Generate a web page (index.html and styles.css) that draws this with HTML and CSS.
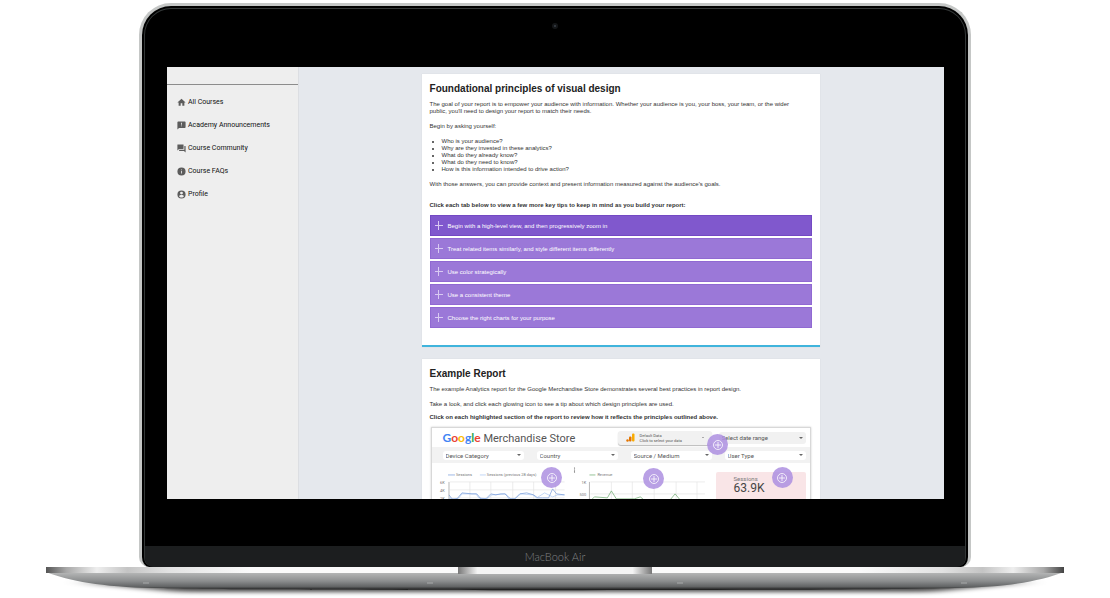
FILE: index.html
```html
<!DOCTYPE html>
<html lang="en">
<head>
  <meta charset="UTF-8">
  <meta name="viewport" content="width=device-width, initial-scale=1.0">
  <title>Foundational principles of visual design</title>
  <link rel="stylesheet" href="styles.css">
</head>
<body>
  <div class="laptop">
    <div class="lid">
      <div class="bezel-top"><span class="camera"></span></div>

      <div class="screen">
        <aside class="sidebar">
          <div class="sidebar-head"></div>
          <nav class="nav">
            <a href="#">
              <svg viewBox="1 1 22 22"><path d="M10 20v-6h4v6h5v-8h3L12 3 2 12h3v8z"/></svg>
              All Courses
            </a>
            <a href="#">
              <svg viewBox="1 1 22 22"><path d="M20 2H4c-1.100 0-2 .9-2 2v18l4-4h14c1.100 0 2-.9 2-2V4c0-1.100-.9-2-2-2zm-7 12h-2v-2h2zm0-4h-2V5h2z"/></svg>
              Academy Announcements
            </a>
            <a href="#">
              <svg viewBox="1 1 22 22"><path d="M21 6h-2v9H6v2c0 .55.45 1 1 1h11l4 4V7c0-.55-.45-1-1-1zm-4 6V3c0-.55-.45-1-1-1H3c-.55 0-1 .45-1 1v14l4-4h10c.55 0 1-.45 1-1z"/></svg>
              Course Community
            </a>
            <a href="#">
              <svg viewBox="1 1 22 22"><path d="M12 2a10 10 0 1 0 0 20 10 10 0 0 0 0-20zm1 15h-2v-6h2zm0-8h-2V7h2z"/></svg>
              Course FAQs
            </a>
            <a href="#">
              <svg viewBox="1 1 22 22"><path fill-rule="evenodd" d="M12 2a10 10 0 1 0 0 20 10 10 0 0 0 0-20zm0 3a3.500 3.500 0 1 1 0 7 3.500 3.500 0 0 1 0-7zM12 19.500c-2.500 0-4.700-1.300-6-3.200 0-2 4-3.100 6-3.100s6 1.100 6 3.100c-1.300 1.900-3.500 3.200-6 3.200z"/></svg>
              Profile
            </a>
          </nav>
        </aside>

        <main class="main">
          <section class="card card-principles">
            <h1>Foundational principles of visual design</h1>
            <p>The goal of your report is to empower your audience with information. Whether your audience is you, your boss, your team, or the wider public, you'll need to design your report to match their needs.</p>
            <p>Begin by asking yourself:</p>
            <ul>
              <li>Who is your audience?</li>
              <li>Why are they invested in these analytics?</li>
              <li>What do they already know?</li>
              <li>What do they need to know?</li>
              <li>How is this information intended to drive action?</li>
            </ul>
            <p>With those answers, you can provide context and present information measured against the audience's goals.</p>
            <p class="hint">Click each tab below to view a few more key tips to keep in mind as you build your report:</p>
            <div class="tabs">
              <button class="tab active" type="button">Begin with a high-level view, and then progressively zoom in</button>
              <button class="tab" type="button">Treat related items similarly, and style different items differently</button>
              <button class="tab" type="button">Use color strategically</button>
              <button class="tab" type="button">Use a consistent theme</button>
              <button class="tab" type="button">Choose the right charts for your purpose</button>
            </div>
          </section>

          <section class="card">
            <h1>Example Report</h1>
            <p>The example Analytics report for the Google Merchandise Store demonstrates several best practices in report design.</p>
            <p class="tight">Take a look, and click each glowing icon to see a tip about which design principles are used.</p>
            <p class="tight strong">Click on each highlighted section of the report to review how it reflects the principles outlined above.</p>

            <div class="report">
              <div class="report-row report-head">
                <h2 class="brand"><span class="google"><span class="blue">G</span><span class="red">o</span><span class="yellow">o</span><span class="blue">g</span><span class="green">l</span><span class="red">e</span></span> Merchandise Store</h2>
                <button class="data-source" type="button">
                  <svg viewBox="0 0 18 18"><rect x="12" y="1" width="5" height="16" rx="2" fill="#f9ab00"/><rect x="6" y="7" width="5" height="10" rx="2" fill="#e37400"/><circle cx="3" cy="15" r="2.500" fill="#e37400"/></svg>
                  <span>Default Data<br>Click to select your data</span>
                </button>
                <div class="select gray"><select aria-label="Date range"><option>Select date range</option></select></div>
              </div>
              <div class="report-row report-filters">
                <div class="select"><select aria-label="Device Category"><option>Device Category</option></select></div>
                <div class="select"><select aria-label="Country"><option>Country</option></select></div>
                <div class="select"><select aria-label="Source / Medium"><option>Source / Medium</option></select></div>
                <div class="select"><select aria-label="User Type"><option>User Type</option></select></div>
              </div>
              <div class="report-body">
                <svg class="charts" viewBox="0 0 274 60">
                  <!-- sessions -->
                  <path class="grid-line" d="M11 27H126M11 35H126M31 19V60M52 19V60M74 19V60M95 19V60M117 19V60M11 19H126"/>
                  <path class="axis" d="M10 19V60"/>
                  <path class="line-sky" d="M41 12H47"/>
                  <path class="line-sky" d="M10 35L14 37L20 35L23 31L37 31L40 35L48 36L53 32L67 31L70 36L76 36L82 31L94 32L98 35L106 30L114 34L119 32L126 32"/>
                  <path class="line-blue" d="M9 12H16M10 32L13 36L18 36L23 30L33 31L38 31L42 36L47 36L52 31L57 32L62 31L66 31L72 36L76 36L81 31L88 30L95 32L99 35L104 35L110 35L114 26L118 31L126 32"/>
                  <text x="17" y="13">Sessions</text>
                  <text x="48" y="13">Sessions (previous 28 days)</text>
                  <text x="1" y="21">6K</text><text x="1" y="29">4K</text><text x="1" y="37">2K</text>
                  <g class="dots"><circle cx="136" cy="5" r=".6"/><circle cx="136" cy="7" r=".6"/><circle cx="136" cy="9" r=".6"/></g>
                  <!-- revenue -->
                  <path class="grid-line" d="M152 19H267M152 31H267M173 19V60M194 19V60M216 19V60M238 19V60M259 19V60"/>
                  <path class="axis" d="M151 19V60"/>
                  <path class="line-green" d="M151 12H157M153 37L156 34L169 35L173 28L178 36L196 36L202 34L207 38L232 37L237 31L242 37L255 37"/>
                  <text x="159" y="13">Revenue</text>
                  <text x="143" y="21">1K</text><text x="141" y="33">500</text>
                </svg>
                <div class="score">
                  <span class="score-label">Sessions</span>
                  <span class="score-value">63.9K</span>
                  <span class="score-label">Product Detail Views</span>
                </div>
              </div>

              <button class="hotspot spot-date" type="button" aria-label="Date range tip"><svg viewBox="0 0 10 10"><circle cx="5" cy="5" r="4.500"/><path d="M5 2V8M2 5H8"/></svg></button>
              <button class="hotspot spot-sessions" type="button" aria-label="Sessions tip"><svg viewBox="0 0 10 10"><circle cx="5" cy="5" r="4.500"/><path d="M5 2V8M2 5H8"/></svg></button>
              <button class="hotspot spot-revenue" type="button" aria-label="Revenue tip"><svg viewBox="0 0 10 10"><circle cx="5" cy="5" r="4.500"/><path d="M5 2V8M2 5H8"/></svg></button>
              <button class="hotspot spot-score" type="button" aria-label="Scorecard tip"><svg viewBox="0 0 10 10"><circle cx="5" cy="5" r="4.500"/><path d="M5 2V8M2 5H8"/></svg></button>
            </div>
          </section>
        </main>
      </div>

      <div class="chin">MacBook Air</div>
    </div>

    <svg class="base" viewBox="0 0 1110 31">
      <defs>
        <linearGradient id="edge">
          <stop offset="0" stop-color="#555"/><stop offset=".02" stop-color="#a8a8a8"/><stop offset=".05" stop-color="#eee"/>
          <stop offset=".08" stop-color="#c4c4c4"/><stop offset=".12" stop-color="#e2e2e2"/><stop offset=".2" stop-color="#fafafa"/>
          <stop offset=".8" stop-color="#fafafa"/><stop offset=".88" stop-color="#e2e2e2"/><stop offset=".92" stop-color="#c4c4c4"/>
          <stop offset=".95" stop-color="#eee"/><stop offset=".98" stop-color="#a8a8a8"/><stop offset="1" stop-color="#444"/>
        </linearGradient>
        <linearGradient id="notch">
          <stop offset="0" stop-color="#777"/><stop offset=".1" stop-color="#f4f4f4"/>
          <stop offset=".9" stop-color="#f4f4f4"/><stop offset="1" stop-color="#777"/>
        </linearGradient>
        <linearGradient id="body" x2="0" y2="1">
          <stop offset="0" stop-color="#b8b9b9"/><stop offset=".5" stop-color="#8b8d8e"/>
          <stop offset=".8" stop-color="#626465"/><stop offset="1" stop-color="#111"/>
        </linearGradient>
        <filter id="blur" x="-10%" y="-100%" width="120%" height="300%"><feGaussianBlur stdDeviation="12 2"/></filter>
      </defs>
      <path d="M80 15H1030L930 25H180Z" fill="#000" opacity=".7" filter="url(#blur)"/>
      <path d="M46 5C70 14 100 20 155 21C260 24 850 24 955 21C1010 20 1040 14 1064 5Z" fill="url(#body)"/>
      <rect x="46" width="1018" height="6" fill="url(#edge)"/>
      <rect x="458" width="194" height="7" fill="url(#notch)"/>
      <path d="M143 16H149M427 16H433M677 16H683M961 16H967" stroke="#a8aaaa"/>
    </svg>
  </div>
</body>
</html>
```
FILE: styles.css
```css
* {
  box-sizing: border-box;
}

body {
  margin: 0;
  background: #fff;
  color: #333;
  font-family: "Liberation Sans", Arial, sans-serif;
  font-size: 6px;
  overflow: hidden;
}

h1, h2, p, ul {
  margin: 0;
}

button, select {
  border: none;
  font-family: inherit;
  cursor: pointer;
}

/* laptop frame */
.laptop {
  padding-top: 3px;
}

.lid {
  width: 75%;
  max-width: 832px;
  margin: 0 auto;
  border: 3px solid #c5c7c6;
  border-bottom: none;
  border-radius: 32px 32px 10px 10px;
  background: #000;
  box-shadow: inset 0 0 0 2px #000, inset 0 0 0 3px #343838;
}

.bezel-top {
  height: 61px;
  padding-top: 17px;
}

.camera {
  display: block;
  width: 6px;
  height: 6px;
  margin: 0 auto;
  border: 2px solid #141618;
  border-radius: 50%;
  background: #3a4048;
}

.chin {
  height: 21px;
  margin: 47px 3px 0;
  border-radius: 0 0 8px 8px;
  background: #1c1e1f;
  color: #808283;
  font-family: Lato, sans-serif;
  font-size: 11px;
  font-weight: 300;
  line-height: 21px;
  text-align: center;
}

.base {
  display: block;
  width: 100%;
}

/* screen */
.screen {
  display: flex;
  aspect-ratio: 9 / 5;
  margin: 0 24px 0 25px;
  overflow: hidden;
  background: #e5e8ed;
}

.sidebar {
  flex: 0 0 17%;
  border-right: 1px solid #dcdee2;
  background: #eee;
}

.sidebar-head {
  height: 18px;
  border-bottom: 1px solid #8c8c8c;
}

.nav {
  display: flex;
  flex-direction: column;
  gap: 13px;
  padding: 12px 10px;
}

.nav a {
  display: flex;
  align-items: center;
  gap: 2px;
  height: 10px;
  color: #111;
  font-family: Roboto, sans-serif;
  font-size: 7px;
  font-weight: 400;
  text-decoration: none;
  white-space: nowrap;
}

.nav svg {
  width: 9px;
  height: 9px;
  fill: #5c5c5c;
}

.main {
  flex: 1;
  display: flex;
  flex-direction: column;
  align-items: center;
  gap: 12px;
  padding: 7px 2px 0 0;
}

.card {
  flex-shrink: 0;
  width: 62%;
  max-width: 398px;
  padding: 8px;
  background: #fff;
  box-shadow: 0 0 1px #ccd0d6;
}

.card-principles {
  padding-bottom: 17px;
  border-bottom: 2px solid #40b4dc;
}

.card h1 {
  margin-bottom: 6px;
  color: #222;
  font-size: 10px;
  line-height: 13px;
}

.card p {
  margin-bottom: 8px;
  padding-right: 12px;
  line-height: 7px;
}

.card ul {
  margin-bottom: 8px;
  padding-left: 12px;
  line-height: 7px;
}

.card .tight {
  margin-bottom: 6px;
}

.card .strong {
  font-weight: bold;
}

.card .hint {
  margin: 14px 0 6px;
  font-weight: bold;
}

.tabs {
  display: flex;
  flex-direction: column;
  gap: 2px;
}

.tab {
  display: flex;
  align-items: center;
  gap: 5px;
  height: 21px;
  padding: 0 4px;
  border: 1px solid #9069d2;
  background: #9b78d8;
  color: #fff;
  font-size: 6px;
}

.tab.active {
  border-color: #7349c3;
  background: #8058cd;
}

.tab::before {
  content: "";
  width: 8px;
  height: 9px;
  background:
    linear-gradient(#d9caf2, #d9caf2) center / 1px 100% no-repeat,
    linear-gradient(#d9caf2, #d9caf2) center / 100% 1px no-repeat;
}

/* report */
.report {
  position: relative;
  margin: 0 1px;
  border: 1px solid #d8d8d8;
  box-shadow: 0 0 2px #ccc;
  font-family: Roboto, sans-serif;
}

.report-row {
  display: grid;
  grid-template-columns: repeat(4, 1fr);
  align-items: center;
  gap: 13px;
  padding: 0 4px 0 11px;
}

.report-head {
  height: 19px;
}

.report-filters {
  height: 16px;
  background: #f2f2f2;
}

.brand {
  grid-column: span 2;
  color: #555;
  font-size: 11px;
  font-weight: 400;
  white-space: nowrap;
}

.google {
  font-family: Lato, sans-serif;
  font-size: 12px;
  font-weight: 700;
}

.blue { color: #4285f4; }
.red { color: #ea4335; }
.yellow { color: #fbbc05; }
.green { color: #34a853; }

.data-source {
  display: flex;
  align-items: center;
  gap: 5px;
  height: 14px;
  margin-left: -13px;
  padding: 0 8px;
  border-radius: 3px;
  background: #f1f1f1;
  box-shadow: 0 1px 1px #bbb;
  color: #555;
  font-size: 4px;
  line-height: 5px;
  text-align: left;
  white-space: nowrap;
}

.data-source svg {
  width: 9px;
  height: 9px;
}

.data-source::after,
.select::after {
  content: "";
  margin-left: auto;
  border: 2px solid transparent;
  border-top-color: #666;
  border-bottom: none;
}

.data-source::after {
  border-width: 1px;
}

.select {
  display: flex;
  align-items: center;
  height: 9px;
  padding-right: 3px;
  border-radius: 3px;
  background: #fff;
}

.select.gray {
  height: 12px;
  margin-left: -6px;
  background: #f1f1f1;
}

.select select {
  flex: 1;
  min-width: 0;
  padding: 0 3px;
  appearance: none;
  background: none;
  color: #555;
  font-size: 6px;
}

.report-body {
  display: flex;
  gap: 4px;
  padding: 0 4px 0 7px;
}

.charts {
  flex: 1;
  min-width: 0;
  fill: none;
  stroke-width: 0.7;
}

.charts text {
  fill: #777;
  font-size: 4px;
}

.charts .grid-line { stroke: #e4e4e4; }
.charts .axis { stroke: #999; }
.charts .line-blue { stroke: #7399d8; }
.charts .line-sky { stroke: #a9c5f0; }
.charts .line-green { stroke: #68a86a; }
.charts .dots { fill: #555; }

.score {
  display: flex;
  flex-direction: column;
  width: 90px;
  height: 50px;
  margin-top: 9px;
  padding: 3px 18px;
  border-radius: 2px;
  background: #f9e5e7;
}

.score-label {
  color: #777;
  font-size: 6px;
  line-height: 7px;
  white-space: nowrap;
}

.score-value {
  margin-bottom: 2px;
  color: #444;
  font-size: 12px;
  line-height: 13px;
}

.hotspot {
  position: absolute;
  display: flex;
  align-items: center;
  justify-content: center;
  width: 21px;
  height: 21px;
  padding: 0;
  border-radius: 50%;
  background: rgba(173, 143, 224, 0.85);
}

.hotspot svg {
  width: 10px;
  height: 10px;
  fill: none;
  stroke: #fff;
  stroke-width: 0.8;
}

.spot-date { left: 73%; top: 6px; }
.spot-sessions { left: 29%; top: 39px; }
.spot-revenue { left: 56%; top: 40px; }
.spot-score { left: 90%; top: 39px; }
```
